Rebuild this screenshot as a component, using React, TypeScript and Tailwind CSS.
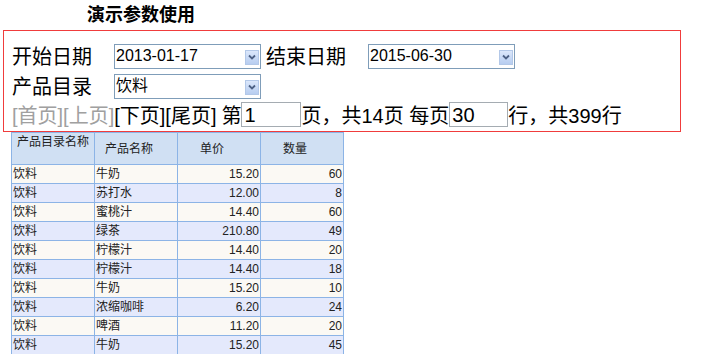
const rows = [
  { cat: "饮料", name: "牛奶", price: "15.20", qty: "60" },
  { cat: "饮料", name: "苏打水", price: "12.00", qty: "8" },
  { cat: "饮料", name: "蜜桃汁", price: "14.40", qty: "60" },
  { cat: "饮料", name: "绿茶", price: "210.80", qty: "49" },
  { cat: "饮料", name: "柠檬汁", price: "14.40", qty: "20" },
  { cat: "饮料", name: "柠檬汁", price: "14.40", qty: "18" },
  { cat: "饮料", name: "牛奶", price: "15.20", qty: "10" },
  { cat: "饮料", name: "浓缩咖啡", price: "6.20", qty: "24" },
  { cat: "饮料", name: "啤酒", price: "11.20", qty: "20" },
  { cat: "饮料", name: "牛奶", price: "15.20", qty: "45" },
];

const font = "font-['Liberation_Sans','Noto_Sans_CJK_SC',sans-serif]";

function FakeSelect({ value }: { value: string }) {
  return (
    <div className="flex h-[25px] w-[147px] items-center justify-between border border-[#7f9db9] bg-white pl-[1px] pr-[1px]">
      <span className="text-[16px] leading-[18px] text-black -mt-[2px]">{value}</span>
      <span className="flex h-[15px] w-[14px] items-center justify-center border border-[#b3c8e8] bg-gradient-to-b from-[#dbe7fb] to-[#b7cdf0] mt-[1px]">
        <svg width="8" height="6" viewBox="0 0 8 6">
          <path d="M1 1.5 L4 4.5 L7 1.5" fill="none" stroke="#4d6185" strokeWidth="1.8" />
        </svg>
      </span>
    </div>
  );
}

function Field({ label, value }: { label: string; value: string }) {
  return (
    <div className="flex items-center">
      <span className="w-[102px] text-[20px] leading-[22px]">{label}</span>
      <FakeSelect value={value} />
    </div>
  );
}

export default function App() {
  return (
    <div className={`${font} bg-white text-black w-[703px] h-[354px] overflow-hidden`}>
      <div className="pl-[87px] pt-[5px] h-[30px] text-[18px] leading-[20px] font-bold">演示参数使用</div>

      <div className="ml-[3px] w-[678px] h-[102px] border border-[#f03c3c] pl-[8px] pt-[13px]">
        <div className="flex items-center gap-[5px]">
          <Field label="开始日期" value="2013-01-17" />
          <Field label="结束日期" value="2015-06-30" />
        </div>
        <div className="mt-[5px]">
          <Field label="产品目录" value="饮料" />
        </div>
        <div className="mt-[3px] flex items-end h-[25px] text-[20px] leading-[22px]">
          <span className="text-[#a0a0a0]">[首页][上页]</span>
          <span>[下页][尾页]</span>
          <span className="ml-[5px]">第</span>
          <span className="flex h-[25px] w-[60px] items-center border border-[#a5acb2] px-[2px]">1</span>
          <span>页，共14页 每页</span>
          <span className="flex h-[25px] w-[59px] items-center border border-[#a5acb2] px-[2px]">30</span>
          <span>行，共399行</span>
        </div>
      </div>

      <table className="ml-[11px] border-collapse text-[12px] leading-[14px] text-[#222] table-fixed">
        <thead>
          <tr className="bg-[#d0e0f3] h-[32px]">
            <th className="w-[83px] border border-[#8cb4e6] align-top pt-[2px] pl-[5px] text-left font-normal">产品目录名称</th>
            <th className="w-[83px] border border-[#8cb4e6] pl-[10px] text-left font-normal">产品名称</th>
            <th className="w-[83px] border border-[#8cb4e6] pl-[22px] text-left font-normal">单价</th>
            <th className="w-[83px] border border-[#8cb4e6] pl-[22px] text-left font-normal">数量</th>
          </tr>
        </thead>
        <tbody>
          {rows.map((r, i) => (
            <tr key={i} className={`h-[19px] ${i % 2 === 0 ? "bg-[#fbf9f4]" : "bg-[#e4e9fc]"}`}>
              <td className="border border-[#8cb4e6] pl-[1px]">{r.cat}</td>
              <td className="border border-[#8cb4e6] pl-[1px]">{r.name}</td>
              <td className="border border-[#8cb4e6] pr-[1px] text-right">{r.price}</td>
              <td className="border border-[#8cb4e6] pr-[1px] text-right">{r.qty}</td>
            </tr>
          ))}
        </tbody>
      </table>
    </div>
  );
}
